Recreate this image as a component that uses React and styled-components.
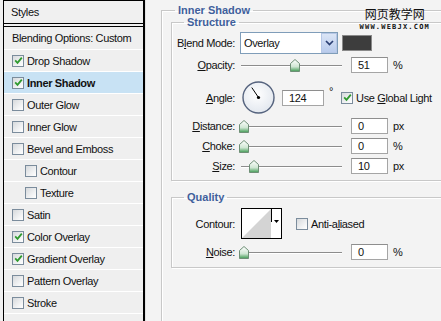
import React from "react";
import styled, { createGlobalStyle } from "styled-components";

const Global = createGlobalStyle`
  html, body {
    margin: 0;
    padding: 0;
    background: #f0f0f0;
  }
  body {
    font-family: "Liberation Sans", Arial, sans-serif;
    font-size: 11px;
    letter-spacing: -0.35px;
    color: #111;
  }
`;

const Window = styled.div`
  position: relative;
  display: flex;
  width: 441px;
  height: 321px;
  overflow: hidden;
  background: #f0f0f0;
`;

const StylesList = styled.div`
  margin-left: 3px;
  width: 139px;
  height: 321px;
  overflow: hidden;
  border: 1px solid #000;
  border-right-width: 2px;
  border-bottom: none;
  display: flex;
  flex-direction: column;
  background: #f0f0f0;
`;

const ListHeader = styled.div`
  flex: none;
  height: 22px;
  display: flex;
  align-items: center;
  padding-left: 7px;
  border-bottom: 4px double #000;
`;

const ListRow = styled.div`
  flex: none;
  box-sizing: border-box;
  height: ${p => p.$h || 22}px;
  display: flex;
  align-items: center;
  gap: 3px;
  padding-left: ${p => (p.$indent ? 21 : 8)}px;
  border-bottom: 1px solid #fff;
  background: ${p => (p.$selected ? "#c8e2f4" : "#efefef")};
  font-weight: ${p => (p.$selected ? "bold" : "normal")};
  white-space: nowrap;
`;

const Box = styled.span`
  box-sizing: border-box;
  width: 12px;
  height: 12px;
  flex: none;
  display: inline-flex;
  align-items: center;
  justify-content: center;
  border: 1px solid #7b8c9c;
  background: linear-gradient(135deg, #d6d9dc 0%, #f4f5f6 70%, #fff 100%);
`;

const Check = ({ checked }) => (
  <Box>
    {checked && (
      <svg width="9" height="9" viewBox="0 0 9 9">
        <path d="M1.2 4.4 L3.5 6.8 L7.8 1.6" fill="none" stroke="#2f9a2f" strokeWidth="1.8" />
      </svg>
    )}
  </Box>
);

const Panel = styled.div`
  flex: 1;
  position: relative;
  height: 321px;
  overflow: hidden;
  background: #f3f3f3;
  border-left: 1px solid #e2e2e2;
  padding-left: 15px;
`;

const Group = styled.fieldset`
  margin: ${p => p.$mt || 0}px 0 0 ${p => p.$ml || 0}px;
  padding: ${p => p.$pt || 0}px 0 ${p => p.$pb || 0}px 0;
  width: ${p => p.$w}px;
  min-height: ${p => p.$minh || 0}px;
  border: 1px solid #c8c8c8;
  box-shadow: inset 1px 1px 0 #fff, 1px 1px 0 #fff;
  display: flex;
  flex-direction: column;
`;

const Legend = styled.legend`
  margin-left: ${p => p.$ml || 12}px;
  padding: 0 3px;
  line-height: 12px;
  font-weight: bold;
  font-size: 11px;
  letter-spacing: 0;
  color: #3f5f9c;
`;

const Row = styled.div`
  display: flex;
  align-items: center;
  height: ${p => p.$h || 16}px;
  margin-top: ${p => p.$mt || 0}px;
`;

const Label = styled.div`
  width: 63px;
  text-align: right;
  margin-right: ${p => p.$gap ?? 5}px;
  white-space: nowrap;
`;

const Select = styled.div`
  box-sizing: border-box;
  width: 98px;
  height: 22px;
  display: flex;
  align-items: center;
  border: 1px solid #7f9db9;
  background: #fff;
  padding-left: 3px;
`;

const SelectText = styled.span`
  flex: 1;
`;

const SelectButton = styled.span`
  box-sizing: border-box;
  width: 16px;
  height: 20px;
  display: flex;
  align-items: center;
  justify-content: center;
  border: 1px solid #b6c7e6;
  background: linear-gradient(#dbe5f6, #b9cbec);
`;

const Swatch = styled.div`
  box-sizing: border-box;
  width: 30px;
  height: 16px;
  margin-left: 4px;
  background: #3d3d3d;
  border: 1px solid #8a8a8a;
`;

const Track = styled.div`
  position: relative;
  width: 102px;
  height: 16px;
  &::before {
    content: "";
    position: absolute;
    left: 1px;
    right: 0;
    top: 8px;
    height: 1px;
    background: #8c8c8c;
    box-shadow: 0 1px 0 #fff;
  }
`;

const Thumb = styled.svg`
  position: absolute;
  top: 2px;
  margin-left: -5px;
`;

const Slider = ({ value }) => (
  <Track>
    <Thumb width="10" height="13" viewBox="0 0 10 13" style={{ left: 4 + value }}>
      <defs>
        <linearGradient id="tg" x1="0" y1="0" x2="0" y2="1">
          <stop offset="0" stopColor="#ffffff" />
          <stop offset="0.6" stopColor="#cfe6d3" />
          <stop offset="1" stopColor="#3f9a52" />
        </linearGradient>
      </defs>
      <polygon points="5,0.5 9.5,4.5 9.5,12.5 0.5,12.5 0.5,4.5" fill="url(#tg)" stroke="#6e8f76" strokeWidth="1" />
    </Thumb>
  </Track>
);

const Input = styled.div`
  box-sizing: border-box;
  width: ${p => p.$w || 37}px;
  height: 16px;
  margin-left: ${p => p.$ml ?? 9}px;
  border: 1px solid #a5a5a5;
  border-top-color: #8e8e8e;
  background: #fff;
  padding-left: 6px;
  line-height: 14px;
`;

const Unit = styled.span`
  margin-left: 5px;
  align-self: ${p => (p.$top ? "flex-start" : "center")};
  margin-top: ${p => (p.$top ? 4 : 0)}px;
`;

const Dial = styled.svg`
  margin-left: 2px;
  flex: none;
`;

const CheckLabel = styled.label`
  display: flex;
  align-items: center;
  gap: 3px;
  margin-left: ${p => p.$ml || 0}px;
  white-space: nowrap;
`;

const ContourBox = styled.div`
  box-sizing: border-box;
  width: 41px;
  height: 31px;
  border: 1px solid #000;
  display: flex;
  background: #fff;
`;

const Watermark = styled.div`
  position: absolute;
  top: 8px;
  right: 11px;
  display: flex;
  flex-direction: column;
  align-items: center;
  line-height: 1;
`;

const WmTitle = styled.span`
  font-family: "Noto Sans CJK SC", sans-serif;
  font-size: 12px;
  letter-spacing: 0;
  color: #111;
`;

const WmUrl = styled.span`
  margin-top: 4px;
  font-family: "DejaVu Sans Mono", monospace;
  font-weight: bold;
  font-size: 7px;
  letter-spacing: 1.2px;
  color: #111;
`;

const items = [
  { label: "Drop Shadow", checked: true },
  { label: "Inner Shadow", checked: true, selected: true },
  { label: "Outer Glow" },
  { label: "Inner Glow" },
  { label: "Bevel and Emboss" },
  { label: "Contour", indent: true },
  { label: "Texture", indent: true },
  { label: "Satin" },
  { label: "Color Overlay", checked: true },
  { label: "Gradient Overlay", checked: true },
  { label: "Pattern Overlay" },
  { label: "Stroke" },
];

export default function App() {
  const ang = (124 * Math.PI) / 180;
  const ex = 16.5 + 12 * Math.cos(ang);
  const ey = 16.5 - 12 * Math.sin(ang);
  return (
    <Window>
      <Global />
      <StylesList>
        <ListHeader>Styles</ListHeader>
        <ListRow $h={23}>Blending Options: Custom</ListRow>
        {items.map(it => (
          <ListRow key={it.label} $indent={it.indent} $selected={it.selected}>
            <Check checked={it.checked} />
            <span>{it.label}</span>
          </ListRow>
        ))}
        <ListRow $h={30} />
      </StylesList>

      <Panel>
        <Group $mt={4} $w={320} $minh={330}>
          <Legend $ml={13}>Inner Shadow</Legend>
          <Group $ml={9} $w={300} $pb={6}>
            <Legend $ml={12}>Structure</Legend>
            <Row $h={22} $mt={4}>
              <Label>B<u>l</u>end Mode:</Label>
              <Select>
                <SelectText>Overlay</SelectText>
                <SelectButton>
                  <svg width="9" height="6" viewBox="0 0 9 6">
                    <path d="M1 1 L4.5 4.5 L8 1" fill="none" stroke="#2b3f73" strokeWidth="1.7" />
                  </svg>
                </SelectButton>
              </Select>
              <Swatch />
            </Row>
            <Row $mt={3}>
              <Label><u>O</u>pacity:</Label>
              <Slider value={51} />
              <Input>51</Input>
              <Unit>%</Unit>
            </Row>
            <Row $h={33} $mt={8}>
              <Label><u>A</u>ngle:</Label>
              <Dial width="33" height="33" viewBox="0 0 33 33">
                <defs>
                  <radialGradient id="dg" cx="0.45" cy="0.4" r="0.6">
                    <stop offset="0" stopColor="#ffffff" />
                    <stop offset="1" stopColor="#e3e8ef" />
                  </radialGradient>
                </defs>
                <circle cx="16.5" cy="16.5" r="15.5" fill="url(#dg)" stroke="#55637e" strokeWidth="1.4" />
                <line x1="16.5" y1="16.5" x2={ex} y2={ey} stroke="#000" strokeWidth="1" />
                <circle cx="16.5" cy="16.5" r="1.6" fill="#000" />
              </Dial>
              <Input $w={42} $ml={7}>124</Input>
              <Unit $top>°</Unit>
              <CheckLabel $ml={8}>
                <Check checked />
                <span>Use <u>G</u>lobal Light</span>
              </CheckLabel>
            </Row>
            <Row $mt={4}>
              <Label><u>D</u>istance:</Label>
              <Slider value={0} />
              <Input>0</Input>
              <Unit>px</Unit>
            </Row>
            <Row $mt={4}>
              <Label><u>C</u>hoke:</Label>
              <Slider value={0} />
              <Input>0</Input>
              <Unit>%</Unit>
            </Row>
            <Row $mt={4}>
              <Label><u>S</u>ize:</Label>
              <Slider value={10} />
              <Input>10</Input>
              <Unit>px</Unit>
            </Row>
          </Group>

          <Group $ml={9} $mt={10} $w={300} $pb={7}>
            <Legend $ml={12}>Quality</Legend>
            <Row $h={31} $mt={5}>
              <Label $gap={6}>Contour:</Label>
              <ContourBox>
                <svg width="39" height="29" viewBox="0 0 39 29">
                  <polygon points="0,29 29,0 29,29" fill="#d4d4d4" />
                  <line x1="29.5" y1="0" x2="29.5" y2="13" stroke="#000" strokeWidth="1" />
                  <polygon points="32,11 37,11 34.5,14" fill="#000" />
                </svg>
              </ContourBox>
              <CheckLabel $ml={14}>
                <Check />
                <span>Anti-a<u>l</u>iased</span>
              </CheckLabel>
            </Row>
            <Row $mt={5}>
              <Label><u>N</u>oise:</Label>
              <Slider value={0} />
              <Input>0</Input>
              <Unit>%</Unit>
            </Row>
          </Group>
        </Group>
        <Watermark>
          <WmTitle>网页教学网</WmTitle>
          <WmUrl>WWW.WEBJX.COM</WmUrl>
        </Watermark>
      </Panel>
    </Window>
  );
}
